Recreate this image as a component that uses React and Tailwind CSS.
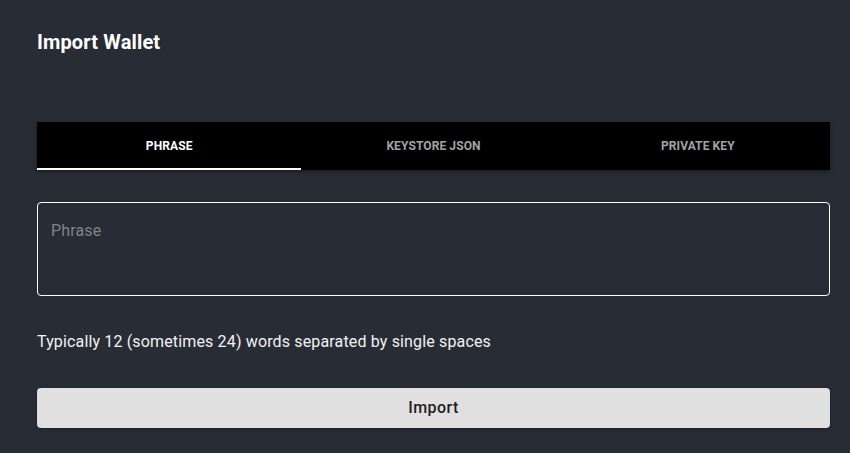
import React, { useState } from 'react';

const tabs = ['Phrase', 'Keystore JSON', 'Private Key'];

export default function App() {
    const [active, setActive] = useState(0);
    const [phrase, setPhrase] = useState('');

    return (
        <div className="min-h-screen bg-[#282c34] pl-[37px] pr-[20px] pt-[30px] font-['Roboto',sans-serif] text-white">
            <h1 className="text-[20px] font-bold leading-[24px] tracking-[0.15px]">Import Wallet</h1>

            <div className="mt-[68px] flex h-[48px] bg-black shadow-[0_2px_4px_rgba(0,0,0,0.35)]">
                {tabs.map((tab, i) => (
                    <button
                        key={tab}
                        onClick={() => setActive(i)}
                        className={`relative flex-1 text-[12px] font-bold uppercase tracking-[0.1px] ${i === active ? 'text-white' : 'text-[#a3a3a3]'}`}
                    >
                        {tab}
                        {i === active && <span className="absolute bottom-0 left-0 h-[2px] w-full bg-white" />}
                    </button>
                ))}
            </div>

            <div className="mt-[32px]">
                <textarea
                    value={phrase}
                    onChange={(e) => setPhrase(e.target.value)}
                    placeholder="Phrase"
                    className="block h-[94px] w-full resize-none rounded-[4px] border border-white bg-transparent px-[13px] pt-[16px] text-[16px] leading-[24px] tracking-[0.15px] text-white placeholder:text-[#80838a] focus:outline-none"
                />
            </div>

            <p className="mt-[34px] text-[16px] leading-[24px] tracking-[0.15px] text-[#f2f2f2]">Typically 12 (sometimes 24) words separated by single spaces</p>

            <button className="mt-[34px] flex h-[40px] w-full items-center justify-center rounded-[4px] bg-[#e0e0e0] text-[16px] font-medium tracking-[0.4px] text-[#1f1f1f] shadow-[0_1px_3px_rgba(0,0,0,0.3)]">
                Import
            </button>
        </div>
    );
}
